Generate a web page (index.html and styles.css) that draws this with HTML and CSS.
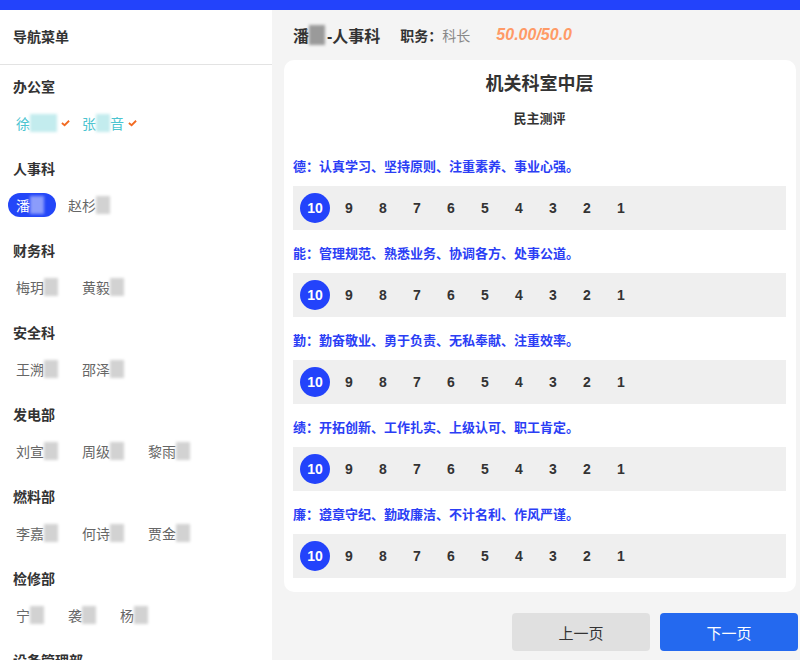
FILE: index.html
```html
<!DOCTYPE html>
<html lang="zh-CN">
<head>
  <meta charset="UTF-8">
  <meta name="viewport" content="width=device-width, initial-scale=1.0">
  <title>民主测评</title>
  <link rel="stylesheet" href="styles.css">
</head>
<body>

<div class="topbar"></div>

<div class="page">
  <!-- 左侧导航 -->
  <div class="sidebar">
    <div class="nav-title">导航菜单</div>

    <div class="dept">
      <div class="dept-name">办公室</div>
      <div class="names">
        <span class="name done">徐<i class="mask w2"></i><svg class="check" viewBox="0 0 10 8"><path d="M1 4 L4 6.5 L9 1.5" /></svg></span>
        <span class="name done">张<i class="mask"></i>音<svg class="check" viewBox="0 0 10 8"><path d="M1 4 L4 6.5 L9 1.5" /></svg></span>
      </div>
    </div>

    <div class="dept">
      <div class="dept-name">人事科</div>
      <div class="names">
        <span class="name active">潘<i class="mask"></i></span>
        <span class="name">赵杉<i class="mask"></i></span>
      </div>
    </div>

    <div class="dept">
      <div class="dept-name">财务科</div>
      <div class="names">
        <span class="name">梅玥<i class="mask"></i></span>
        <span class="name">黄毅<i class="mask"></i></span>
      </div>
    </div>

    <div class="dept">
      <div class="dept-name">安全科</div>
      <div class="names">
        <span class="name">王溯<i class="mask"></i></span>
        <span class="name">邵泽<i class="mask"></i></span>
      </div>
    </div>

    <div class="dept">
      <div class="dept-name">发电部</div>
      <div class="names">
        <span class="name">刘宣<i class="mask"></i></span>
        <span class="name">周级<i class="mask"></i></span>
        <span class="name">黎雨<i class="mask"></i></span>
      </div>
    </div>

    <div class="dept">
      <div class="dept-name">燃料部</div>
      <div class="names">
        <span class="name">李嘉<i class="mask"></i></span>
        <span class="name">何诗<i class="mask"></i></span>
        <span class="name">贾金<i class="mask"></i></span>
      </div>
    </div>

    <div class="dept">
      <div class="dept-name">检修部</div>
      <div class="names">
        <span class="name">宁<i class="mask"></i></span>
        <span class="name">袭<i class="mask"></i></span>
        <span class="name">杨<i class="mask"></i></span>
      </div>
    </div>

    <div class="dept">
      <div class="dept-name">设备管理部</div>
    </div>
  </div>

  <!-- 右侧测评 -->
  <div class="main">
    <div class="header">
      <span class="person">潘<i class="mask dark"></i>-人事科</span>
      <span class="duty"><b>职务：</b>科长</span>
      <span class="score">50.00/50.0</span>
    </div>

    <div class="card">
      <div class="card-title">机关科室中层</div>
      <div class="card-sub">民主测评</div>

      <div class="item">
        <div class="question">德：认真学习、坚持原则、注重素养、事业心强。</div>
        <div class="scores">
          <span class="num on">10</span><span class="num">9</span><span class="num">8</span><span class="num">7</span><span class="num">6</span><span class="num">5</span><span class="num">4</span><span class="num">3</span><span class="num">2</span><span class="num">1</span>
        </div>
      </div>

      <div class="item">
        <div class="question">能：管理规范、熟悉业务、协调各方、处事公道。</div>
        <div class="scores">
          <span class="num on">10</span><span class="num">9</span><span class="num">8</span><span class="num">7</span><span class="num">6</span><span class="num">5</span><span class="num">4</span><span class="num">3</span><span class="num">2</span><span class="num">1</span>
        </div>
      </div>

      <div class="item">
        <div class="question">勤：勤奋敬业、勇于负责、无私奉献、注重效率。</div>
        <div class="scores">
          <span class="num on">10</span><span class="num">9</span><span class="num">8</span><span class="num">7</span><span class="num">6</span><span class="num">5</span><span class="num">4</span><span class="num">3</span><span class="num">2</span><span class="num">1</span>
        </div>
      </div>

      <div class="item">
        <div class="question">绩：开拓创新、工作扎实、上级认可、职工肯定。</div>
        <div class="scores">
          <span class="num on">10</span><span class="num">9</span><span class="num">8</span><span class="num">7</span><span class="num">6</span><span class="num">5</span><span class="num">4</span><span class="num">3</span><span class="num">2</span><span class="num">1</span>
        </div>
      </div>

      <div class="item">
        <div class="question">廉：遵章守纪、勤政廉洁、不计名利、作风严谨。</div>
        <div class="scores">
          <span class="num on">10</span><span class="num">9</span><span class="num">8</span><span class="num">7</span><span class="num">6</span><span class="num">5</span><span class="num">4</span><span class="num">3</span><span class="num">2</span><span class="num">1</span>
        </div>
      </div>
    </div>

    <div class="footer">
      <button class="btn prev">上一页</button>
      <button class="btn next">下一页</button>
    </div>
  </div>
</div>

</body>
</html>
```

FILE: styles.css
```css
* {
  margin: 0;
  padding: 0;
  box-sizing: border-box;
}
body {
  height: 660px;
  overflow: hidden;
  font-family: "Liberation Sans", "Noto Sans CJK SC", sans-serif;
  color: #333;
  background: #f4f4f4;
}
.topbar {
  height: 10px;
  background: #2343fb;
}
.page {
  display: flex;
  height: 650px;
}

/* sidebar */
.sidebar {
  width: 272px;
  flex-shrink: 0;
  background: #fff;
  overflow: hidden;
}
.nav-title {
  height: 55px;
  line-height: 54px;
  padding-left: 13px;
  font-size: 14px;
  font-weight: bold;
  border-bottom: 1px solid #e3e3e3;
}
.dept {
  padding: 12px 0;
}
.dept-name {
  height: 20px;
  line-height: 20px;
  padding-left: 13px;
  font-size: 14px;
  font-weight: bold;
}
.names {
  display: flex;
  gap: 8px;
  margin-top: 14px;
  padding-left: 8px;
}
.name {
  display: flex;
  align-items: center;
  height: 24px;
  padding: 0 8px;
  font-size: 14px;
  color: #666;
  border-radius: 12px;
}
.name.done {
  padding-right: 0;
  margin-right: -4px;
  color: #4cc4d0;
}
.name.active {
  padding: 0 12px 0 8px;
  margin-right: -4px;
  background: #2346f8;
  color: #fff;
}
.mask {
  display: inline-block;
  width: 14px;
  height: 18px;
  background: #d2d2d2;
  filter: blur(1.5px);
}
.mask.w2 {
  width: 27px;
}
.done .mask {
  background: #c3ecee;
}
.active .mask {
  background: #8b9cfb;
}
.mask.dark {
  width: 16px;
  height: 20px;
  margin-right: 2px;
  background: #9a9a9a;
}
.check {
  width: 9px;
  height: 8px;
  margin-left: 4px;
  fill: none;
  stroke: #f26a21;
  stroke-width: 2;
}

/* main */
.main {
  flex: 1;
  display: flex;
  flex-direction: column;
}
.header {
  display: flex;
  align-items: center;
  height: 50px;
  padding: 0 0 0 21px;
}
.person {
  display: flex;
  align-items: center;
  font-size: 16px;
  font-weight: bold;
}
.duty {
  margin-left: 20px;
  font-size: 14px;
  color: #888;
}
.duty b {
  color: #333;
}
.score {
  margin-left: 26px;
  font-size: 16px;
  font-weight: bold;
  font-style: italic;
  color: #ff9a66;
}
.card {
  margin: 0 4px 0 12px;
  padding: 12px 10px 14px 9px;
  background: #fff;
  border-radius: 10px;
}
.card-title {
  line-height: 24px;
  font-size: 18px;
  font-weight: bold;
  text-align: center;
}
.card-sub {
  margin-top: 13px;
  line-height: 20px;
  font-size: 13px;
  font-weight: bold;
  text-align: center;
  margin-bottom: 28px;
}
.item + .item {
  margin-top: 14px;
}
.question {
  line-height: 20px;
  font-size: 13px;
  font-weight: bold;
  color: #2b3ef5;
}
.scores {
  display: flex;
  align-items: center;
  gap: 4px;
  height: 44px;
  margin-top: 9px;
  padding-left: 7px;
  background: #efefef;
}
.num {
  width: 30px;
  height: 30px;
  line-height: 30px;
  text-align: center;
  font-size: 14px;
  font-weight: bold;
  color: #333;
  border-radius: 50%;
}
.num.on {
  background: #2343fb;
  color: #fff;
}
.footer {
  display: flex;
  justify-content: flex-end;
  gap: 10px;
  padding: 21px 2px 0 0;
}
.btn {
  width: 138px;
  height: 38px;
  font-family: inherit;
  font-size: 15px;
  border: none;
  border-radius: 4px;
  cursor: pointer;
}
.btn.prev {
  background: #e0e0e0;
  color: #333;
}
.btn.next {
  background: #2469ef;
  color: #fff;
}
```
